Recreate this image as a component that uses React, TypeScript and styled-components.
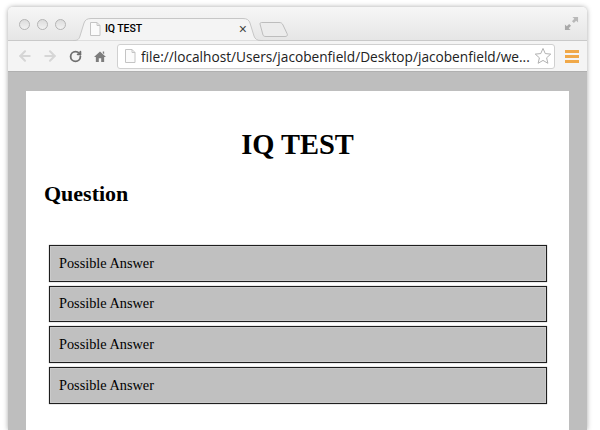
import React from "react";
import styled, { createGlobalStyle } from "styled-components";
import { ArrowLeft, ArrowRight, RotateCw } from "lucide-react";

const GlobalStyle = createGlobalStyle`
  html, body {
    margin: 0;
    padding: 0;
    background: #fff;
  }
`;

const answers = ["Possible Answer", "Possible Answer", "Possible Answer", "Possible Answer"];

const App = () => {
  return (
    <Screen>
      <GlobalStyle />
      <Window>
        <TabStrip>
          <Lights>
            <Light />
            <Light />
            <Light />
          </Lights>
          <Tab>
            <TabShape viewBox="0 0 190 23" preserveAspectRatio="none">
              <path
                d="M0 22.5 H1 C5 22.5 6 21 7 18 L11 5 C12 2 14 0.5 18 0.5 H170 C174 0.5 176 2 177 5 L181 18 C182 21 184 22.5 188 22.5 H190"
                fill="#f4f4f4"
                stroke="#c6c6c6"
              />
            </TabShape>
            <TabIcon>
              <PageIcon size={14} />
            </TabIcon>
            <TabTitle>IQ TEST</TabTitle>
            <TabClose>×</TabClose>
          </Tab>
          <NewTab viewBox="0 0 29 15">
            <path
              d="M1 2 C1 1 1.5 0.5 2.5 0.5 H20 C22 0.5 23 1 24 3 L28 11.5 C29 13.5 28 14.5 26 14.5 H7 C5 14.5 4.5 14 4 13 Z"
              fill="#ececec"
              stroke="#bdbdbd"
            />
          </NewTab>
          <Spring />
          <FullScreen viewBox="0 0 16 16">
            <path d="M9 1 H15 V7 L13 5 L10.5 7.5 L8.5 5.5 L11 3 Z" fill="#b9b9b9" />
            <path d="M1 9 L3 11 L5.5 8.5 L7.5 10.5 L5 13 L7 15 H1 Z" fill="#a9a9a9" />
          </FullScreen>
        </TabStrip>
        <Toolbar>
          <NavButton $color="#d6d6d6">
            <ArrowLeft size={16} strokeWidth={3.2} />
          </NavButton>
          <NavButton $color="#d6d6d6">
            <ArrowRight size={16} strokeWidth={3.2} />
          </NavButton>
          <NavButton $color="#6f6f6f">
            <RotateCw size={13} strokeWidth={3.4} />
          </NavButton>
          <NavButton $color="#7d7d7d">
            <svg width="12" height="13" viewBox="0 0 13 13">
              <path d="M6.5 1 L13 7 H11 V12.5 H7.8 V8.5 H5.2 V12.5 H2 V7 H0 Z M9.5 1 H11 V4 L9.5 2.8 Z" fill="currentColor" />
            </svg>
          </NavButton>
          <AddressBar>
            <PageIcon size={14} />
            <Url>file://localhost/Users/jacobenfield/Desktop/jacobenfield/we...</Url>
            <svg width="18" height="18" viewBox="0 0 20 20">
              <path
                d="M10 1.6 L12.5 7.3 L18.6 7.9 L14 12 L15.4 18.1 L10 14.9 L4.6 18.1 L6 12 L1.4 7.9 L7.5 7.3 Z"
                fill="#fff"
                stroke="#a8a8a8"
              />
            </svg>
          </AddressBar>
          <Menu>
            <MenuBar />
            <MenuBar />
            <MenuBar />
          </Menu>
        </Toolbar>
        <Content>
          <Page>
            <Title>IQ TEST</Title>
            <Question>Question</Question>
            <AnswerList>
              {answers.map((answer, i) => (
                <Answer key={i}>{answer}</Answer>
              ))}
            </AnswerList>
          </Page>
        </Content>
      </Window>
    </Screen>
  );
};

const PageIcon = ({ size }: { size: number }) => (
  <svg width={size} height={size} viewBox="0 0 14 14" style={{ flex: "none" }}>
    <path d="M2.5 0.5 H9 L12 3.5 V13.5 H2.5 Z" fill="#fbfbfb" stroke="#c4c4c4" />
    <path d="M9 0.5 V3.5 H12" fill="none" stroke="#c4c4c4" />
  </svg>
);

export default App;

const Screen = styled.div`
  width: 600px;
  height: 430px;
  box-sizing: border-box;
  padding: 7px 13px 0 8px;
  overflow: hidden;
  background: #fff;
`;

const Window = styled.div`
  height: 423px;
  display: flex;
  flex-direction: column;
  border-radius: 5px 5px 0 0;
  overflow: hidden;
  box-shadow: 0 0 5px rgba(0, 0, 0, 0.35);
`;

const TabStrip = styled.div`
  height: 34px;
  flex: none;
  box-sizing: border-box;
  display: flex;
  align-items: flex-end;
  padding: 0 8px 0 10.5px;
  background: linear-gradient(#f6f6f6, #e6e6e6);
  border-bottom: 1px solid #c9c9c9;
`;

const Lights = styled.div`
  display: flex;
  gap: 7px;
  align-self: center;
  margin-top: 1px;
`;

const Light = styled.span`
  width: 11px;
  height: 11px;
  box-sizing: border-box;
  border-radius: 50%;
  border: 1px solid #b4b4b4;
  background: linear-gradient(#dcdcdc, #f2f2f2);
`;

const Tab = styled.div`
  position: relative;
  width: 190px;
  height: 23px;
  margin: 0 0 -1px 7.5px;
  box-sizing: border-box;
  display: flex;
  align-items: center;
  padding: 0 0 1px 15px;
`;

const TabShape = styled.svg`
  position: absolute;
  inset: 0;
  width: 100%;
  height: 100%;
`;

const TabIcon = styled.span`
  position: relative;
  display: flex;
`;

const TabTitle = styled.span`
  position: relative;
  flex: 1;
  margin-left: 3px;
  padding-bottom: 2px;
  font: 500 10.5px Roboto, "Liberation Sans", sans-serif;
  letter-spacing: -0.1px;
  color: #000;
`;

const TabClose = styled.span`
  position: relative;
  margin-right: 16px;
  font: 14px "Liberation Sans", Arial, sans-serif;
  color: #444;
`;

const NewTab = styled.svg`
  width: 29px;
  height: 15px;
  margin: 0 0 3px -4px;
`;

const Spring = styled.div`
  flex: 1;
`;

const FullScreen = styled.svg`
  width: 15px;
  height: 15px;
  align-self: center;
`;

const Toolbar = styled.div`
  height: 31px;
  flex: none;
  box-sizing: border-box;
  display: flex;
  align-items: center;
  padding: 0 8px 0 4.5px;
  background: #f4f4f4;
  border-bottom: 1px solid #b0b0b0;
`;

const NavButton = styled.div<{ $color: string }>`
  width: 25px;
  flex: none;
  display: flex;
  justify-content: center;
  color: ${(p) => p.$color};
`;

const AddressBar = styled.div`
  flex: 1;
  min-width: 0;
  height: 25px;
  margin-left: 4.5px;
  box-sizing: border-box;
  display: flex;
  align-items: center;
  padding: 0 2px 0 5px;
  background: #fff;
  border: 1px solid #d0d0d0;
  border-radius: 3px;
`;

const Url = styled.span`
  flex: 1;
  margin-left: 4px;
  font: 13.68px "Open Sans", "Liberation Sans", sans-serif;
  color: #222;
  white-space: nowrap;
  overflow: hidden;
`;

const Menu = styled.div`
  width: 14px;
  margin-left: 10px;
  display: flex;
  flex-direction: column;
  gap: 2px;
`;

const MenuBar = styled.span`
  height: 3px;
  background: #f0a848;
`;

const Content = styled.div`
  flex: 1;
  min-height: 0;
  padding: 19px 18px 0;
  background: #bebebe;
`;

const Page = styled.div`
  height: 100%;
  box-sizing: border-box;
  padding: 37px 18px 0;
  background: #fff;
  font-family: "Liberation Serif", "Times New Roman", serif;
  color: #000;
`;

const Title = styled.h1`
  margin: 0;
  text-align: center;
  font-size: 28.5px;
  line-height: 34px;
  font-weight: 700;
`;

const Question = styled.h2`
  margin: 19px 0 0;
  font-size: 22px;
  line-height: 26px;
  font-weight: 700;
`;

const AnswerList = styled.div`
  display: flex;
  flex-direction: column;
  gap: 4px;
  margin: 38px 4px 0 5px;
`;

const Answer = styled.div`
  height: 36.67px;
  box-sizing: border-box;
  display: flex;
  align-items: center;
  padding-left: 9px;
  background: #c0c0c0;
  border: 1px solid #1e1e1e;
  box-shadow: inset 0 0 0 1px #cacaca, 0 0 1px rgba(0, 0, 0, 0.5);
  font-size: 14.3px;
`;
